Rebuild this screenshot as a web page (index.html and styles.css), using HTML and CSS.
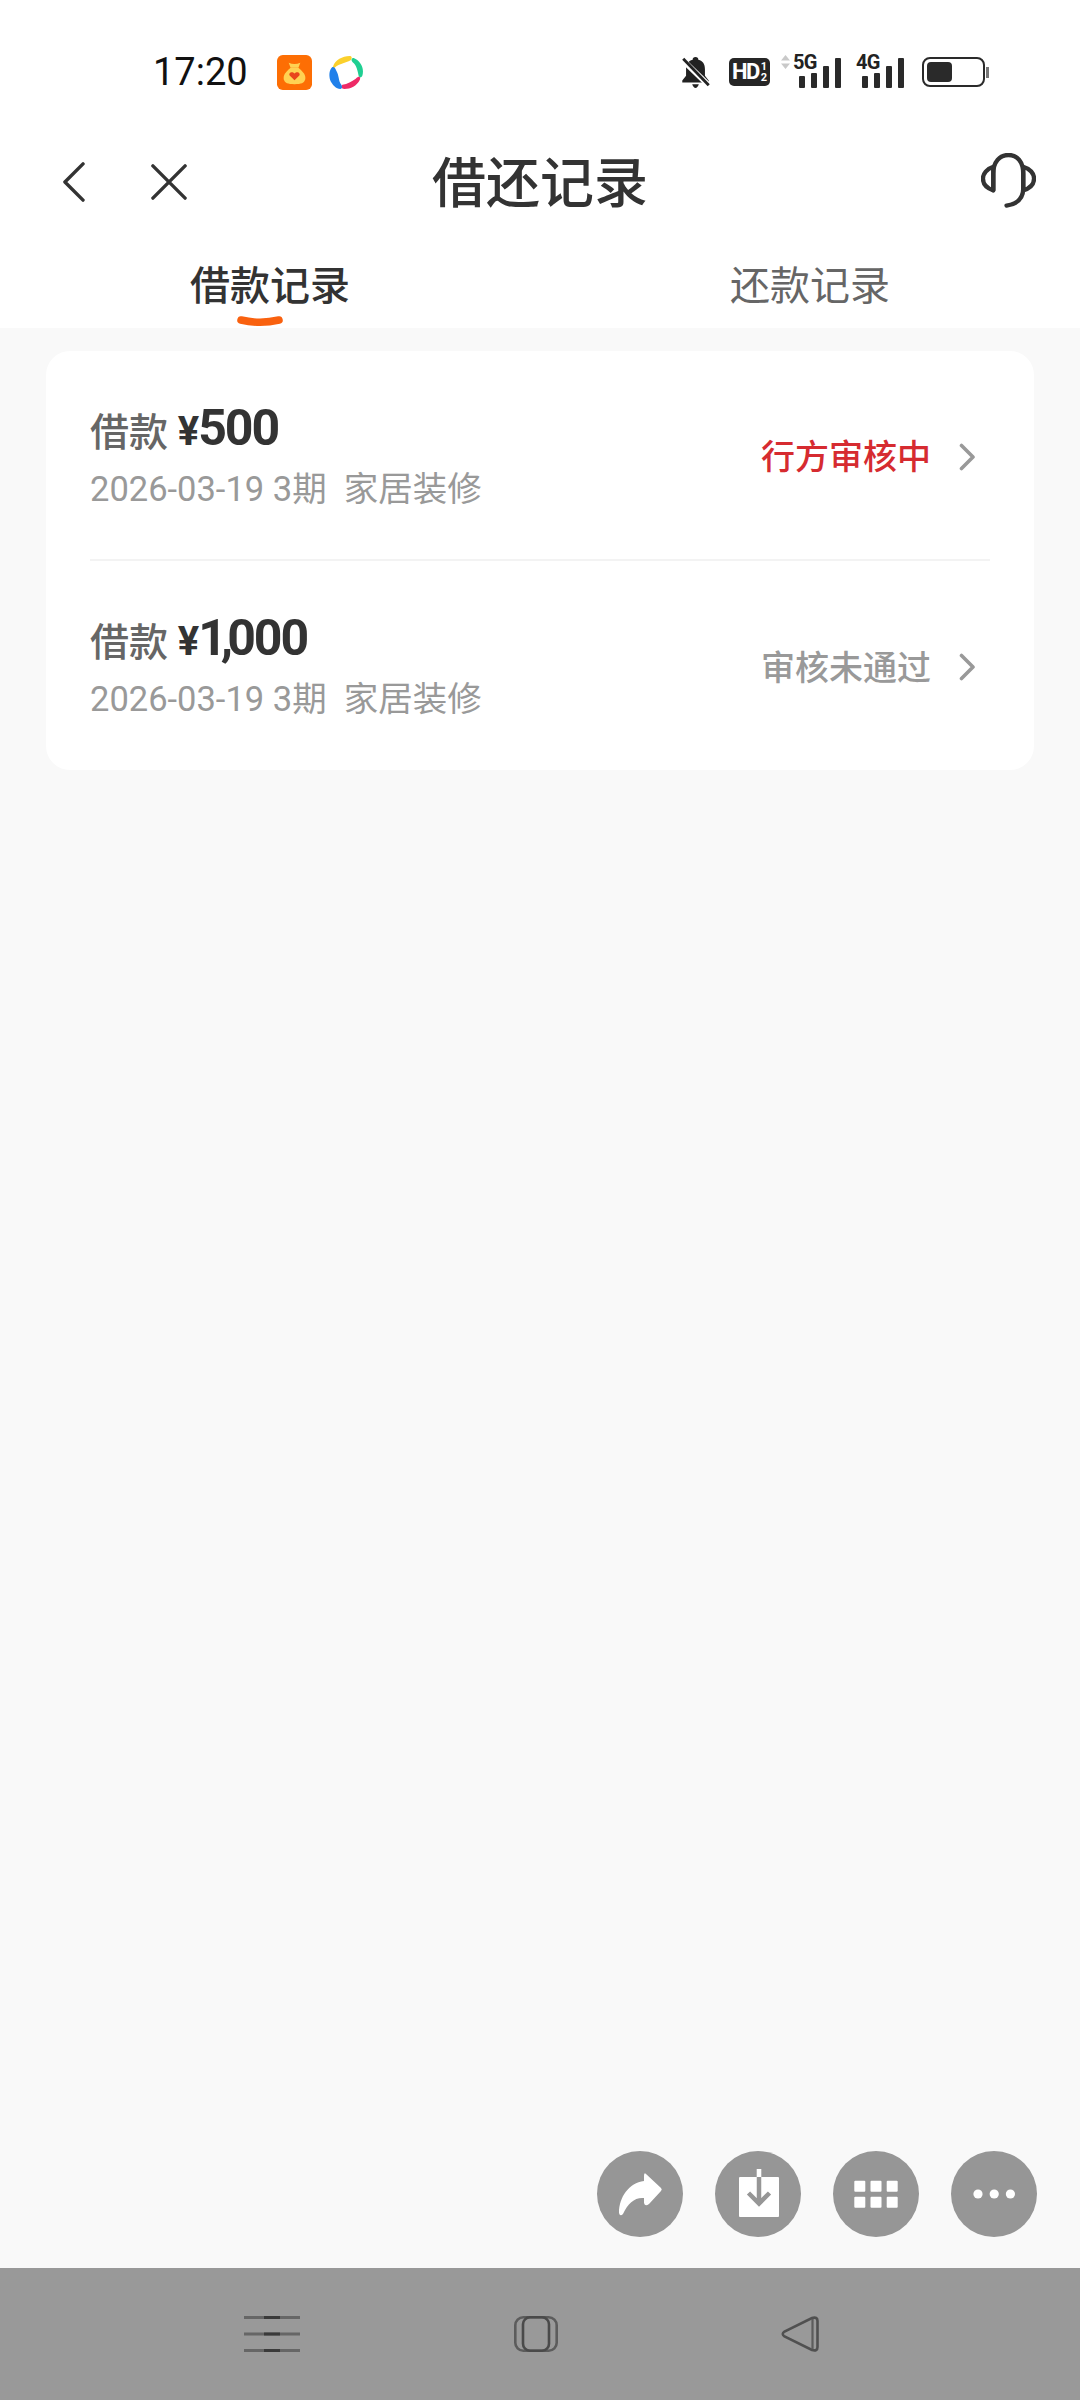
FILE: index.html
```html
<!DOCTYPE html>
<html lang="zh">
<head>
  <meta charset="utf-8">
  <title>借还记录</title>
  <link rel="stylesheet" href="styles.css">
</head>
<body>
  <div class="page">
    <!-- status bar -->
    <div class="status-bar">
      <span class="clock">17:20</span>
      <svg class="app-icon" viewBox="0 0 36 36">
        <rect width="36" height="36" rx="6" fill="#fd6e04"/>
        <path d="M12 8 Q18 10.500 24 8 L22 13 H14Z" fill="#ffd253"/>
        <path d="M14 13 H22 C27 17 30 21 29 25 C28 29 25 30 18 30 C11 30 8 29 7 25 C6 21 9 17 14 13Z" fill="#ffd253"/>
        <path d="M18 26 L13 21 C11.500 18.500 15.500 16 18 19 C20.500 16 24.500 18.500 23 21Z" fill="#e9451c"/>
      </svg>
      <svg class="app-icon" viewBox="0 0 34 34">
        <path d="M4 11 C6 5 13 1 20 1 C22 1 23 3 21 5 C16 8 10 8 6 12 C4 14 3 13 4 11Z" fill="#fbd02c"/>
        <path d="M24 3 C29 5 33 10 33 16 C33 21 31 23 29 21 C28 16 27 10 23 7 C21 5 22 3 24 3Z" fill="#1fcf92"/>
        <path d="M30 24 C27 30 21 33 15 33 C12 33 11 31 13 29 C18 28 22 26 26 23 C29 20 31 21 30 24Z" fill="#ee2a66"/>
        <path d="M3 12 C0 15 0 20 1 24 C3 29 7 33 11 33 C13 33 13 31 12 29 C9 25 10 20 7 15 C6 12 4 11 3 12Z" fill="#2180ea"/>
      </svg>
      <div class="status-right">
        <svg class="ico-bell" viewBox="0 0 32 36">
          <path d="M16 2 C18 2 19 3 19 5 C24 6 26 10 26 15 V22 L30 27 V29 H2 V27 L6 22 V15 C6 10 8 6 13 5 C13 3 14 2 16 2Z" fill="#222"/>
          <path d="M12.500 31 H19.500 Q18 35 16 35 Q14 35 12.500 31Z" fill="#222"/>
          <path d="M1 4 L31 33" stroke="#fff" stroke-width="6"/>
          <path d="M3 4 L30 32" stroke="#222" stroke-width="3"/>
        </svg>
        <div class="hd-badge"><b>HD</b><span class="hd-frac"><i>1</i><i>2</i></span></div>
        <div class="signal signal-first">
          <svg class="updown" viewBox="0 0 9 14">
            <path d="M4.500 0 L9 5.500 H0Z M0 8.500 H9 L4.500 14Z" fill="#c9c9c9"/>
          </svg>
          <span class="net">5G</span>
          <i class="bar b1"></i><i class="bar b2"></i><i class="bar b3"></i><i class="bar b4"></i>
        </div>
        <div class="signal signal-last">
          <span class="net">4G</span>
          <i class="bar b1"></i><i class="bar b2"></i><i class="bar b3"></i><i class="bar b4"></i>
        </div>
        <div class="battery"><span class="battery-fill"></span></div>
        <span class="battery-nub"></span>
      </div>
    </div>

    <!-- title -->
    <div class="top-bar">
      <div class="top-left">
        <svg class="ico-back" viewBox="0 0 24 42"><path d="M22 2 L3 21 L22 40" fill="none" stroke="#333" stroke-width="3.600" stroke-linecap="round" stroke-linejoin="round"/></svg>
        <svg class="ico-close" viewBox="0 0 38 38"><path d="M2 2 L36 36 M36 2 L2 36" fill="none" stroke="#333" stroke-width="3.600" stroke-linecap="round"/></svg>
      </div>
      <h1 class="title">借还记录</h1>
      <div class="top-right">
        <svg class="ico-service" viewBox="0 0 56 56">
          <path d="M12.500 38 V21 C12.500 9 19 2 28 2 C37 2 43 9 43 21 V36 C43 46 37 52 26 53.500" fill="none" stroke="#333" stroke-width="4.400" stroke-linecap="round"/>
          <path d="M12.500 14 C6 16 2 21 2 26 C2 32 6 36 12.500 38Z" fill="none" stroke="#333" stroke-width="4.400" stroke-linejoin="round"/>
          <path d="M43 14 C50 16 54 21 54 26 C54 32 50 36 43 38Z" fill="none" stroke="#333" stroke-width="4.400" stroke-linejoin="round"/>
        </svg>
      </div>
    </div>

    <!-- tabs -->
    <div class="tabs">
      <div class="tab tab-on">借款记录
        <svg class="tab-mark" viewBox="0 0 46 12"><path d="M4 4 Q23 8.500 42 4" fill="none" stroke="#f9610f" stroke-width="7.500" stroke-linecap="round"/></svg>
      </div>
      <div class="tab">还款记录</div>
    </div>

    <div class="main">
      <div class="card">
        <div class="row row-line">
          <div class="row-info">
            <div class="row-title">借款 <span class="money"><span class="yen">¥</span>500</span></div>
            <div class="row-sub">2026-03-19 3期&nbsp;&nbsp;家居装修</div>
          </div>
          <span class="state state-red">行方审核中</span>
          <svg class="ico-more" viewBox="0 0 17 28"><path d="M2.500 2.500 L14 14 L2.500 25.500" fill="none" stroke="#999" stroke-width="3.600" stroke-linecap="round" stroke-linejoin="round"/></svg>
        </div>
        <div class="row">
          <div class="row-info">
            <div class="row-title">借款 <span class="money"><span class="yen">¥</span><span class="tight">1,</span>000</span></div>
            <div class="row-sub">2026-03-19 3期&nbsp;&nbsp;家居装修</div>
          </div>
          <span class="state">审核未通过</span>
          <svg class="ico-more" viewBox="0 0 17 28"><path d="M2.500 2.500 L14 14 L2.500 25.500" fill="none" stroke="#999" stroke-width="3.600" stroke-linecap="round" stroke-linejoin="round"/></svg>
        </div>
      </div>

      <!-- floating tools -->
      <div class="tools">
        <svg class="tool" viewBox="0 0 86 86">
          <path d="M49 23 L64 37 Q65.500 38.500 64 40 L52 53 Q48 56 47 52 V47 C38 46 31 52 26 63 Q23 66 22 62 C22 46 32 32 47 30 V25 Q47 21 49 23Z" fill="#fff"/>
        </svg>
        <svg class="tool" viewBox="0 0 86 86">
          <rect x="24" y="26" width="40" height="40" rx="1" fill="#fff"/>
          <rect x="41.700" y="18" width="4.600" height="8" fill="#fff"/>
          <path d="M44 26 V52 M33.500 42 L44 52.500 L54.500 42" fill="none" stroke="#969696" stroke-width="4.500"/>
        </svg>
        <svg class="tool" viewBox="0 0 86 86">
          <g fill="#fff">
            <rect x="21.300" y="29.700" width="11" height="11" rx="1"/>
            <rect x="37.500" y="29.700" width="11" height="11" rx="1"/>
            <rect x="53.700" y="29.700" width="11" height="11" rx="1"/>
            <rect x="21.300" y="45.700" width="11" height="11" rx="1"/>
            <rect x="37.500" y="45.700" width="11" height="11" rx="1"/>
            <rect x="53.700" y="45.700" width="11" height="11" rx="1"/>
          </g>
        </svg>
        <svg class="tool" viewBox="0 0 86 86">
          <g fill="#fff">
            <circle cx="27" cy="43" r="4.600"/>
            <circle cx="43.200" cy="43" r="4.600"/>
            <circle cx="59.400" cy="43" r="4.600"/>
          </g>
        </svg>
      </div>
    </div>

    <!-- system nav -->
    <div class="nav-bar">
      <svg class="nav-menu" viewBox="0 0 56 36">
        <path d="M0 1.500 H56 M0 18 H56 M0 34.500 H56" stroke="#666" stroke-width="3"/>
        <path d="M20 1.500 H36 M20 18 H36 M20 34.500 H36" stroke="#3a3a3a" stroke-width="3"/>
      </svg>
      <svg class="nav-home" viewBox="0 0 44 36">
        <rect x="1.300" y="1.300" width="41.400" height="33.400" rx="8" fill="none" stroke="#5c5c5c" stroke-width="2.600"/>
        <rect x="9" y="1.300" width="26" height="33.400" rx="7" fill="none" stroke="#4a4a4a" stroke-width="2.600"/>
      </svg>
      <svg class="nav-back" viewBox="0 0 38 36">
        <path d="M31 2 Q36.500 0.500 36.500 5 V31 Q36.500 35.500 31 34 L3.500 20.500 Q0 18 3.500 15.500Z" fill="none" stroke="#505050" stroke-width="2.600"/>
        <path d="M31.500 3 V33" stroke="#5c5c5c" stroke-width="2.200"/>
      </svg>
    </div>
  </div>
</body>
</html>
```

FILE: styles.css
```css
* {
  box-sizing: border-box;
}
html, body {
  margin: 0;
  padding: 0;
}
body {
  font-family: Roboto, "Noto Sans CJK SC", sans-serif;
  color: #333;
}
.page {
  width: 1080px;
  height: 2400px;
  display: flex;
  flex-direction: column;
  background: #fff;
  overflow: hidden;
}

/* status bar */
.status-bar {
  height: 144px;
  display: flex;
  align-items: center;
  padding: 0 91px 0 153px;
  flex: none;
}
.clock {
  font-size: 38px;
  color: #111;
  width: 124px;
}
.app-icon {
  width: 35px;
  height: 35px;
  margin-right: 17px;
}
.status-right {
  margin-left: auto;
  display: flex;
  align-items: center;
}
.ico-bell {
  width: 31px;
  height: 34px;
  margin-right: 18px;
}
.hd-badge {
  width: 41px;
  height: 28px;
  border-radius: 5px;
  background: #262626;
  color: #fff;
  display: flex;
  align-items: center;
  justify-content: center;
  margin-right: 14px;
}
.hd-badge b {
  font-size: 22px;
  letter-spacing: -1.500px;
  line-height: 28px;
}
.hd-frac {
  display: flex;
  flex-direction: column;
  margin-left: 2px;
}
.hd-frac i {
  font-style: normal;
  font-weight: 700;
  font-size: 11px;
  line-height: 11px;
}
.signal {
  position: relative;
  width: 47px;
  height: 32px;
  display: flex;
  align-items: flex-end;
  gap: 6px;
  padding-left: 2px;
  margin-right: 16px;
}
.signal-first {
  margin-left: 13px;
}
.signal-last {
  margin-right: 10px;
}
.updown {
  position: absolute;
  left: -16px;
  top: -1px;
  width: 9px;
  height: 14px;
}
.net {
  position: absolute;
  left: -4px;
  top: -4px;
  font-size: 20px;
  line-height: 20px;
  font-weight: 700;
  letter-spacing: -0.800px;
  color: #222;
}
.bar {
  width: 6px;
  background: #2a2a2a;
  border-radius: 1px;
}
.b1 { height: 12px; }
.b2 { height: 15px; }
.b3 { height: 22px; }
.b4 { height: 30px; }
.battery {
  width: 63px;
  height: 30px;
  border: 2.500px solid #2a2a2a;
  border-radius: 8px;
  padding: 2.500px;
  margin-left: 5px;
}
.battery-fill {
  display: block;
  width: 25px;
  height: 20px;
  background: #2a2a2a;
  border-radius: 4px;
}
.battery-nub {
  width: 3px;
  height: 11px;
  background: #777;
  margin-left: 1px;
}

/* title */
.top-bar {
  height: 76px;
  flex: none;
  display: grid;
  grid-template-columns: 1fr auto 1fr;
  align-items: center;
}
.top-left {
  display: flex;
  align-items: center;
  gap: 66px;
  padding-left: 62px;
}
.top-right {
  display: flex;
  justify-content: flex-end;
  padding: 0 44px 3px 0;
}
.ico-back {
  width: 23px;
  height: 40px;
}
.ico-close {
  width: 36px;
  height: 36px;
}
.title {
  margin: 0;
  font-size: 54px;
  line-height: 70px;
  padding-top: 6px;
  font-weight: 500;
  color: #333;
}
.ico-service {
  display: block;
  width: 55px;
  height: 55px;
}

/* tabs */
.tabs {
  height: 108px;
  flex: none;
  display: flex;
}
.tab {
  flex: 1;
  position: relative;
  text-align: center;
  font-size: 40px;
  line-height: 48px;
  padding-top: 43px;
  color: #666;
}
.tab-on {
  color: #333;
  font-weight: 500;
}
.tab-mark {
  position: absolute;
  left: 237px;
  top: 96px;
  width: 46px;
  height: 12px;
}

/* list */
.main {
  flex: 1;
  position: relative;
  background: #f9f9f9;
  padding: 23px 46px 0;
}
.card {
  height: 419px;
  background: #fff;
  border-radius: 24px;
  padding: 0 44px;
}
.row {
  height: 209px;
  display: flex;
  align-items: center;
  padding-right: 14px;
}
.row-line {
  height: 210px;
  border-bottom: 2px solid #f3f3f3;
}
.row-info {
  flex: 1;
}
.row-title {
  font-size: 39px;
  line-height: 60px;
  font-weight: 500;
  color: #666;
  white-space: nowrap;
}
.money {
  font-size: 50px;
  font-weight: 700;
  color: #333;
  letter-spacing: -2px;
  vertical-align: 1px;
}
.yen {
  font-size: 40px;
  margin-right: 1px;
}
.tight {
  letter-spacing: -6px;
}
.row-sub {
  font-size: 34.500px;
  line-height: 48px;
  margin-top: 2px;
  color: #999;
  white-space: nowrap;
}
.state {
  font-size: 34px;
  line-height: 40px;
  font-weight: 500;
  color: #999;
  margin-right: 28px;
  padding-top: 4px;
}
.state-red {
  color: #d62b30;
}
.ico-more {
  width: 17px;
  height: 28px;
  margin-top: 3px;
}

/* floating tools */
.tools {
  position: absolute;
  right: 43px;
  bottom: 31px;
  display: flex;
  gap: 32px;
}
.tool {
  width: 86px;
  height: 86px;
  border-radius: 50%;
  background: #969696;
}

/* system nav */
.nav-bar {
  height: 132px;
  flex: none;
  background: #999;
  display: flex;
  align-items: center;
  padding-left: 244px;
}
.nav-menu {
  width: 56px;
  height: 36px;
  margin-right: 214px;
}
.nav-home {
  width: 44px;
  height: 36px;
  margin-right: 223px;
}
.nav-back {
  width: 38px;
  height: 36px;
}
```
